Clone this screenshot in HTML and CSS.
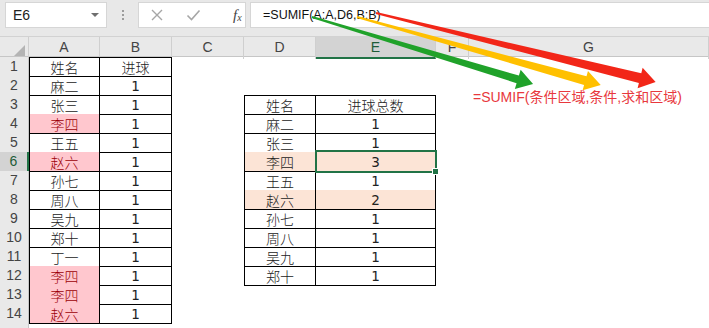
FILE: index.html
```html
<!DOCTYPE html>
<html lang="zh-CN">
<head>
    <meta charset="UTF-8">
    <meta name="viewport" content="width=device-width, initial-scale=1.0">
    <title>SUMIF</title>
    <link rel="stylesheet" href="styles.css">
</head>
<body>

    <div id="app">
        <!-- formula bar -->
        <div class="toolbar">
            <div class="namebox">E6<span class="drop"></span></div>
            <div class="grip"><i></i><i></i><i></i></div>
            <div class="fnbox">
                <svg class="ico" width="14" height="14" viewBox="0 0 14 14"><path d="M2 2 L12 12 M12 2 L2 12" stroke="#a6a6a6" stroke-width="1.4" fill="none"/></svg>
                <svg class="ico" width="15" height="14" viewBox="0 0 15 14"><path d="M1.5 7.5 L5.5 11.5 L13.5 2.5" stroke="#a6a6a6" stroke-width="1.6" fill="none"/></svg>
                <span class="fx">f<sub>x</sub></span>
            </div>
            <div class="formula">=SUMIF(A:A,D6,B:B)</div>
        </div>

        <!-- sheet -->
        <div class="sheet">
            <div class="row colhdr">
                <div class="corner"><svg width="11" height="11" viewBox="0 0 11 11"><path d="M11 0 L11 11 L0 11 Z" fill="#b4b4b4"/></svg></div>
                <div>A</div><div>B</div><div>C</div><div>D</div><div class="sel">E</div><div>F</div><div>G</div>
            </div>

            <div class="row"><div class="rh">1</div><div class="c t tt tl">姓名</div><div class="c t tt">进球</div><div class="c"></div><div class="c"></div><div class="c"></div><div class="c"></div><div class="c"></div></div>
            <div class="row"><div class="rh">2</div><div class="c t tl">麻二</div><div class="c t n">1</div><div class="c"></div><div class="c"></div><div class="c"></div><div class="c"></div><div class="c"></div></div>
            <div class="row"><div class="rh">3</div><div class="c t tl">张三</div><div class="c t n">1</div><div class="c"></div><div class="c t tt tl">姓名</div><div class="c t tt">进球总数</div><div class="c"></div><div class="c"></div></div>
            <div class="row"><div class="rh">4</div><div class="c t tl bad">李四</div><div class="c t n">1</div><div class="c"></div><div class="c t tl">麻二</div><div class="c t n">1</div><div class="c"></div><div class="c"></div></div>
            <div class="row"><div class="rh">5</div><div class="c t tl">王五</div><div class="c t n">1</div><div class="c"></div><div class="c t tl">张三</div><div class="c t n">1</div><div class="c"></div><div class="c"></div></div>
            <div class="row"><div class="rh sel">6</div><div class="c t tl bad">赵六</div><div class="c t n">1</div><div class="c"></div><div class="c t tl hl">李四</div><div class="c t n hl cur">3</div><div class="c"></div><div class="c"></div></div>
            <div class="row"><div class="rh">7</div><div class="c t tl">孙七</div><div class="c t n">1</div><div class="c"></div><div class="c t tl">王五</div><div class="c t n">1</div><div class="c"></div><div class="c"></div></div>
            <div class="row"><div class="rh">8</div><div class="c t tl">周八</div><div class="c t n">1</div><div class="c"></div><div class="c t tl hl">赵六</div><div class="c t n hl">2</div><div class="c"></div><div class="c"></div></div>
            <div class="row"><div class="rh">9</div><div class="c t tl">吴九</div><div class="c t n">1</div><div class="c"></div><div class="c t tl">孙七</div><div class="c t n">1</div><div class="c"></div><div class="c"></div></div>
            <div class="row"><div class="rh">10</div><div class="c t tl">郑十</div><div class="c t n">1</div><div class="c"></div><div class="c t tl">周八</div><div class="c t n">1</div><div class="c"></div><div class="c"></div></div>
            <div class="row"><div class="rh">11</div><div class="c t tl">丁一</div><div class="c t n">1</div><div class="c"></div><div class="c t tl">吴九</div><div class="c t n">1</div><div class="c"></div><div class="c"></div></div>
            <div class="row"><div class="rh">12</div><div class="c t tl bad">李四</div><div class="c t n">1</div><div class="c"></div><div class="c t tl">郑十</div><div class="c t n">1</div><div class="c"></div><div class="c"></div></div>
            <div class="row"><div class="rh">13</div><div class="c t tl bad">李四</div><div class="c t n">1</div><div class="c"></div><div class="c"></div><div class="c"></div><div class="c"></div><div class="c"></div></div>
            <div class="row"><div class="rh">14</div><div class="c t tl bad">赵六</div><div class="c t n">1</div><div class="c"></div><div class="c"></div><div class="c"></div><div class="c"></div><div class="c"></div></div>
            <div class="row"><div class="rh"></div><div class="c"></div><div class="c"></div><div class="c"></div><div class="c"></div><div class="c"></div><div class="c"></div><div class="c"></div></div>
        </div>

        <!-- annotation arrows -->
        <svg class="arrows" width="709" height="328" viewBox="0 0 709 328">
            <g transform="translate(312 17) rotate(16.87)">
                <polygon points="0,-1 215,-4 215,-10 231,0 215,10 215,4 0,1" fill="#20a22a"/>
            </g>
            <g transform="translate(357 17) rotate(15.57)">
                <polygon points="0,-1 237,-4.5 237,-10 253,0 237,10 237,4.5 0,1" fill="#ffc000"/>
            </g>
            <g transform="translate(376 13) rotate(13.84)">
                <polygon points="0,-1 272,-5 272,-10.5 288,0 272,10.5 272,5 0,1" fill="#f22618"/>
            </g>
        </svg>
        <div class="note">=SUMIF(条件区域,条件,求和区域)</div>
    </div>

</body>
</html>
```

FILE: styles.css
```css
body {
    margin: 0;
    background-color: #fff;
    font-family: "Liberation Sans", "Noto Sans CJK SC", sans-serif;
}
#app {
    position: relative;
    width: 709px;
    height: 328px;
    overflow: hidden;
}

/* formula bar */
.toolbar {
    display: flex;
    align-items: flex-start;
    height: 37px;
    padding: 2px 0 0 5px;
    box-sizing: border-box;
    background-color: #e8e8e8;
    border-bottom: 1px solid #d2d2d2;
}
.namebox, .fnbox, .formula {
    height: 26px;
    box-sizing: border-box;
    background-color: #fff;
    border: 1px solid #d6d6d6;
}
.namebox {
    position: relative;
    width: 102px;
    padding-left: 7px;
    font-size: 14px;
    line-height: 24px;
    color: #222;
}
.drop {
    position: absolute;
    right: 7px;
    top: 10px;
    border-left: 4px solid transparent;
    border-right: 4px solid transparent;
    border-top: 4px solid #6f6f6f;
}
.grip {
    width: 31px;
    display: flex;
    flex-direction: column;
    align-items: center;
    gap: 2px;
    padding-top: 8px;
}
.grip i {
    width: 2px;
    height: 2px;
    background-color: #9c9c9c;
}
.fnbox {
    width: 108px;
    display: flex;
    align-items: center;
    padding-left: 11px;
    gap: 22px;
}
.fx {
    margin-left: 10px;
    font-family: "Liberation Serif", serif;
    font-style: italic;
    font-size: 15px;
    color: #444;
}
.fx sub {
    font-size: 10px;
    vertical-align: -1px;
}
.formula {
    flex: 1;
    margin-left: 4px;
    border-right: none;
    padding-left: 12px;
    font-size: 12.5px;
    line-height: 24px;
    color: #111;
}

/* grid */
.row {
    display: grid;
    grid-template-columns: 29px 71px 72px 72px 72px 120px 33px 240px;
    height: 19px;
}
.colhdr {
    height: 20px;
    background-color: #e9e9e9;
    border-bottom: 1px solid #c6c6c6;
    box-sizing: border-box;
}
.colhdr div {
    border-right: 1px solid #cfcfcf;
    text-align: center;
    font-size: 14px;
    line-height: 20px;
    color: #444;
}
.colhdr .sel {
    background-color: #d3d3d3;
    border-bottom: 2px solid #217346;
    color: #1e5c38;
}
.corner {
    display: flex;
    justify-content: flex-end;
    align-items: flex-end;
    padding: 0 3px 3px 0;
}
.rh {
    background-color: #e9e9e9;
    border-right: 1px solid #c6c6c6;
    border-bottom: 1px solid #d6d6d6;
    box-sizing: border-box;
    text-align: center;
    font-size: 14px;
    line-height: 19px;
    color: #444;
}
.rh.sel {
    background-color: #d3d3d3;
    border-right: 2px solid #217346;
    color: #1e5c38;
}

/* cells */
.c {
    box-sizing: border-box;
    text-align: center;
    font-family: "Noto Sans CJK SC", sans-serif;
    font-weight: 300;
    font-size: 14px;
    line-height: 16px;
    padding-top: 2px;
    color: #222;
}
.c.n {
    font-family: "DejaVu Sans", sans-serif;
    font-weight: 400;
    font-size: 13.5px;
}
.t {
    border-right: 1px solid #000;
    border-bottom: 1px solid #000;
}
.tt {
    border-top: 1px solid #000;
    padding-top: 1px;
}
.tl {
    border-left: 1px solid #000;
}
.bad {
    background-color: #ffc7ce;
    color: #9c0006;
}
.hl {
    background-color: #fce4d6;
}
.cur {
    position: relative;
}
.cur::after {
    content: "";
    position: absolute;
    left: -1px;
    top: -2px;
    right: -2px;
    bottom: -2px;
    border: 2px solid #217346;
}
.cur::before {
    content: "";
    position: absolute;
    right: -4px;
    bottom: -4px;
    width: 5px;
    height: 5px;
    background-color: #217346;
    border: 1px solid #fff;
    z-index: 1;
}

/* annotation */
.arrows {
    position: absolute;
    left: 0;
    top: 0;
    pointer-events: none;
}
.note {
    position: absolute;
    left: 473px;
    top: 86px;
    font-size: 14px;
    color: #e8383d;
    white-space: nowrap;
}
```
